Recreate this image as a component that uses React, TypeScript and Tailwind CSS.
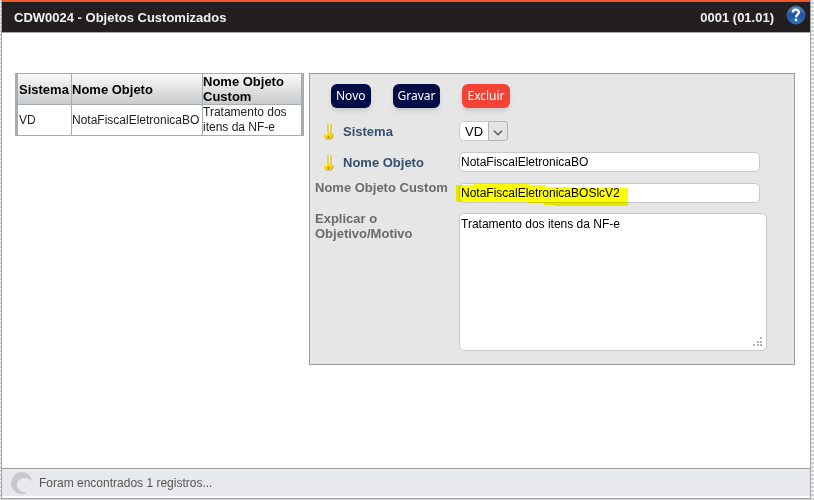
import { useState } from 'react';
import type { ReactNode } from 'react';

const KeyIcon = () => (
  <svg width="12" height="17" viewBox="0 0 12 17" aria-hidden="true">
    <path d="M5 1h3v8.500L6.500 11 5 9.500z" fill="#fdf6b8" />
    <path d="M5 1v9M8 1v9" fill="none" stroke="#dcb92f" strokeWidth="1.2" />
    <path d="M4.500 9.500h4L10 11.500v2.500L8 16H3L1 14.500V12z" fill="#f3d716" />
    <path d="M2 12.500 4.500 10" fill="none" stroke="#fff46a" strokeWidth="1.4" />
    <path d="M3 16h5l2-2v-2.500" fill="none" stroke="#c89c22" />
    <circle cx="5.5" cy="13.8" r="1.1" fill="#ad8212" />
  </svg>
);

const HelpIcon = () => (
  <svg width="20" height="20" viewBox="0 0 20 20" aria-hidden="true">
    <defs>
      <linearGradient id="help" x1="0" y1="0" x2="0" y2="1">
        <stop offset="0" stopColor="#5b8cc6" />
        <stop offset="0.5" stopColor="#1f559d" />
        <stop offset="1" stopColor="#2f7acb" />
      </linearGradient>
    </defs>
    <circle cx="10" cy="10" r="9" fill="url(#help)" stroke="#34629c" />
    <path d="M6.800 7.600c0-3.800 6.100-3.800 6.100-.3 0 2.300-2.900 2.300-2.900 4.900" fill="none" stroke="#fff" strokeWidth="2.3" />
    <circle cx="10" cy="14.9" r="1.4" fill="#fff" />
  </svg>
);

const SpinnerIcon = () => (
  <svg width="24" height="24" viewBox="0 0 24 24" aria-hidden="true">
    <path
      d="M22.500 11C21.500 4.500 17 1 11.500 1A11 11 0 0 0 1 12c0 6 4.500 11 10.500 11 2.500 0 4-.5 5-1.500C11 21.500 7 18.500 7 14c0-4 3-7 7.500-7 3.500 0 6.500 1.500 8 4z"
      fill="#c8c8ca"
    />
  </svg>
);

const Highlight = () => (
  <svg
    className="absolute -left-1 top-0 pointer-events-none mix-blend-multiply"
    width="175"
    height="24"
    viewBox="0 0 175 24"
    aria-hidden="true"
  >
    <path d="M1 2h18V1h55v1h16v2h25v1h58v18h-73v-1H89v-2H73v-1H1z" fill="#ffff00" />
  </svg>
);

const records = [
  { sistema: 'VD', objeto: 'NotaFiscalEletronicaBO', custom: 'Tratamento dos itens da NF-e' },
];

const actions = [
  { label: 'Novo', style: 'bg-[#020c45]' },
  { label: 'Gravar', style: 'bg-[#020c45]' },
  { label: 'Excluir', style: 'bg-[#f44336]' },
];

type KeyLabelProps = { htmlFor: string; children: ReactNode };

const KeyLabel = ({ htmlFor, children }: KeyLabelProps) => (
  <label htmlFor={htmlFor} className="flex items-center gap-2 pl-2 font-bold text-[#34506c]">
    <KeyIcon />
    {children}
  </label>
);

const inputStyle =
  'block h-5 w-full rounded-[5px] border border-[#c8c8c8] bg-white px-px text-xs text-black outline-none';

const App = () => {
  const [form, setForm] = useState({
    sistema: 'VD',
    objeto: 'NotaFiscalEletronicaBO',
    custom: 'NotaFiscalEletronicaBOSlcV2',
    motivo: 'Tratamento dos itens da NF-e',
  });

  const update = (field: string, value: string) => setForm({ ...form, [field]: value });

  return (
    <div className="min-h-screen flex flex-col pl-px pr-[3px] pb-px bg-[repeating-linear-gradient(#f3f3f3_0_2px,#d2d2d2_2px_4px)] font-['Liberation_Sans',Arial,sans-serif] text-[13px] leading-[15px]">
      <div className="flex-1 flex flex-col bg-white border-x border-b border-[#9da1a5]">
        <header className="h-[33px] flex items-center justify-between border-t-2 border-t-[#f0592b] border-b border-b-[#a5a5a5] bg-[#231f20] pl-3 pr-1 font-bold text-[#f2f2f2]">
          <h1>CDW0024 - Objetos Customizados</h1>
          <div className="flex items-center gap-3">
            <span>0001 (01.01)</span>
            <button type="button" aria-label="Ajuda" className="pb-1">
              <HelpIcon />
            </button>
          </div>
        </header>

        <main className="flex-1 flex items-start gap-[5px] pt-10 pl-[13px] pr-[15px]">
          <table className="w-[289px] shrink-0 table-fixed border-collapse border border-x-[3px] border-[#a4adb3] text-left">
            <colgroup>
              <col className="w-[55px]" />
              <col className="w-[131px]" />
              <col />
            </colgroup>
            <thead className="bg-linear-to-b from-[#fafafa] to-[#c9c9c9]">
              <tr>
                <th className="border border-[#a4adb3] p-0 pl-px">Sistema</th>
                <th className="border border-[#a4adb3] p-0">Nome Objeto</th>
                <th className="border border-[#a4adb3] p-0">Nome Objeto Custom</th>
              </tr>
            </thead>
            <tbody className="text-xs leading-[15px] text-[#222]">
              {records.map((record) => (
                <tr key={record.objeto}>
                  <td className="border border-[#a4adb3] p-0 pl-px">{record.sistema}</td>
                  <td className="border border-[#a4adb3] p-0">{record.objeto}</td>
                  <td className="border border-[#a4adb3] p-0">{record.custom}</td>
                </tr>
              ))}
            </tbody>
          </table>

          <form
            className="flex-1 border border-[#9a9a9a] bg-[#e6e6e6] pt-[10px] pb-[13px] pl-[5px] pr-[27px]"
            onSubmit={(e) => e.preventDefault()}
          >
            <div className="flex gap-[22px] pl-4">
              {actions.map((action) => (
                <button
                  key={action.label}
                  type="button"
                  className={`h-6 rounded-md px-[5px] font-['Noto_Sans',sans-serif] text-xs text-white shadow-md ${action.style}`}
                >
                  {action.label}
                </button>
              ))}
            </div>

            <div className="mt-[13px] grid grid-cols-[144px_1fr] gap-y-[11px]">
              <KeyLabel htmlFor="sistema">Sistema</KeyLabel>
              <div className="relative w-[49px]">
                <select
                  id="sistema"
                  value={form.sistema}
                  onChange={(e) => update('sistema', e.target.value)}
                  className="block h-5 w-full appearance-none rounded-[5px] border border-[#c8c8c8] bg-white pl-[5px] text-[13px] text-black outline-none"
                >
                  <option value="VD">VD</option>
                </select>
                <span className="absolute inset-y-0 right-0 w-5 flex items-center justify-center rounded-r-[3px] border border-[#b4b4b4] bg-[#e4e4e4] pt-1 pointer-events-none">
                  <svg width="10" height="6" viewBox="0 0 10 6" aria-hidden="true">
                    <path d="M1 .8 5 4.800 9 .8" fill="none" stroke="#555" strokeWidth="1.4" />
                  </svg>
                </span>
              </div>

              <KeyLabel htmlFor="objeto">Nome Objeto</KeyLabel>
              <div className="pr-[7px]">
                <input
                  id="objeto"
                  type="text"
                  value={form.objeto}
                  onChange={(e) => update('objeto', e.target.value)}
                  className={inputStyle}
                />
              </div>

              <label htmlFor="custom" className="-mt-[3px] font-bold text-[#6b6b6b]">
                Nome Objeto Custom
              </label>
              <div className="relative pr-[7px]">
                <input
                  id="custom"
                  type="text"
                  value={form.custom}
                  onChange={(e) => update('custom', e.target.value)}
                  className={inputStyle}
                />
                <Highlight />
              </div>

              <label htmlFor="motivo" className="-mt-[3px] font-bold text-[#6b6b6b]">
                Explicar o Objetivo/Motivo
              </label>
              <div className="relative -mt-px">
                <textarea
                  id="motivo"
                  value={form.motivo}
                  onChange={(e) => update('motivo', e.target.value)}
                  className="block h-[138px] w-full resize-none rounded-[5px] border border-[#c8c8c8] bg-white px-px py-0.5 text-xs text-black outline-none"
                />
                <svg
                  className="absolute bottom-1 right-1 pointer-events-none"
                  width="10"
                  height="10"
                  viewBox="0 0 10 10"
                  aria-hidden="true"
                >
                  <path d="M7 0h2v2H7zM4 4h2v2H4zM7 4h2v2H7zM0 7h2v2H0zM4 7h2v2H4zM7 7h2v2H7z" fill="#b5b5b5" />
                </svg>
              </div>
            </div>
          </form>
        </main>

        <footer className="h-[30px] flex items-center gap-[5px] border-t border-t-[#9a9a9a] border-b-2 border-b-white bg-[#e8e9ed] pl-2 text-xs text-[#555]">
          <SpinnerIcon />
          <span role="status">Foram encontrados 1 registros...</span>
        </footer>
      </div>
    </div>
  );
};

export default App;
